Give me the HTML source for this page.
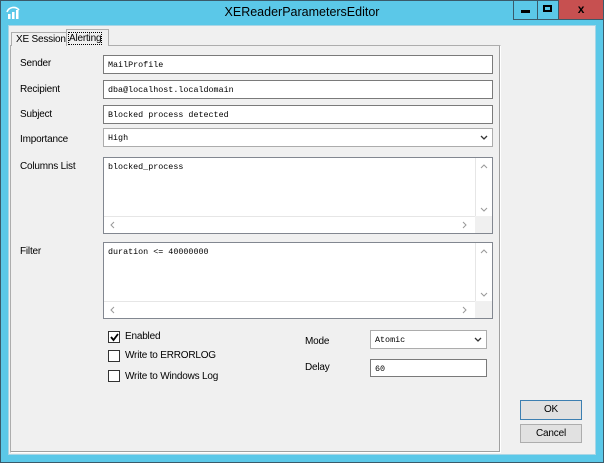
<!DOCTYPE html>
<html><head><style>
*{box-sizing:border-box}
body{margin:0;width:604px;height:463px;background:#5bc8e8;font-family:"Liberation Sans",sans-serif;font-size:10px;letter-spacing:-0.2px;color:#000;position:relative;overflow:hidden}
.abs{position:absolute;white-space:nowrap}
.win{position:absolute;left:0;top:0;width:604px;height:463px;border:1px solid #3a5a6a}
.client{position:absolute;left:8px;top:25px;width:588px;height:430px;background:#f0f0f0;border:1px solid #a9d6e6}
.title{position:absolute;left:0;top:5px;width:604px;text-align:center;font-size:12.5px;letter-spacing:0;color:#000}
.btn{position:absolute;top:0;height:20px;border:1px solid #3a5a6a;border-top:none}
.panel{position:absolute;left:10px;top:45px;width:491px;height:408px;border:1px solid #adadad;border-right-color:#fff;border-bottom-color:#fff;box-shadow:inset -1px -1px 0 #a0a0a0;background:#f0f0f0}
.tab{position:absolute;border:1px solid #adadad;border-bottom:none;background:#f0f0f0;white-space:nowrap}
.lbl{position:absolute;left:20px;white-space:nowrap}
.inp{position:absolute;background:#fff;border:1px solid #7a7a7a;font-family:"Liberation Mono",monospace;font-size:8.4px;letter-spacing:0;padding:4px 4px;white-space:nowrap}
.ta{position:absolute;left:103px;width:390px;height:77px;background:#fff;border:1px solid #828790}
.vs{position:absolute;right:0;top:0;width:17px;height:59px;background:#fff;border-left:1px solid #e6e6e6}
.hs{position:absolute;left:0;bottom:0;width:371px;height:17px;background:#fff;border-top:1px solid #e6e6e6}
.corner{position:absolute;right:0;bottom:0;width:17px;height:17px;background:#f0f0f0}
.cb{position:absolute;left:108px;width:12px;height:12px;border:1px solid #333;background:#fff}
.pb{position:absolute;left:520px;width:62px;height:19px;background:#e1e1e1;border:1px solid #adadad;text-align:center;line-height:17px}
</style></head><body>
<div class="win"></div>
<svg class="abs" style="left:5px;top:4px" width="16" height="16" viewBox="0 0 16 16"><path d="M2 8 A7 7 0 0 1 14 6" stroke="#fff" stroke-width="1.6" fill="none"/><rect x="3" y="10" width="2.5" height="5" fill="#fff"/><rect x="7" y="8" width="2.5" height="7" fill="#fff"/><rect x="11" y="6" width="2.5" height="9" fill="#fff"/></svg>
<div class="title">XEReaderParametersEditor</div>
<div class="btn" style="left:513px;width:25px"><div class="abs" style="left:7px;top:10px;width:9px;height:3px;background:#000"></div></div>
<div class="btn" style="left:537px;width:22px;border-left:none"><div class="abs" style="left:6px;top:5px;width:9px;height:7px;border:2px solid #000"></div></div>
<div class="btn" style="left:559px;width:45px;background:#c75050;border-left:none;text-align:center;font-weight:bold;font-size:12px;line-height:18px">x</div>
<div class="client"></div>
<div class="panel"></div>
<div class="tab" style="left:11px;top:32px;width:56px;height:14px;padding:1px 0 0 4px">XE Session</div>
<div class="tab" style="left:66px;top:29px;width:43px;height:17px;padding:3px 2px"><span style="outline:1px dotted #000">Alerting</span></div>

<div class="lbl" style="top:58px">Sender</div>
<div class="inp" style="left:103px;top:55px;width:390px;height:19px">MailProfile</div>
<div class="lbl" style="top:84px">Recipient</div>
<div class="inp" style="left:103px;top:80px;width:390px;height:19px">dba@localhost.localdomain</div>
<div class="lbl" style="top:109px">Subject</div>
<div class="inp" style="left:103px;top:105px;width:390px;height:19px">Blocked process detected</div>
<div class="lbl" style="top:134px">Importance</div>
<div class="inp" style="left:103px;top:128px;width:390px;height:19px;border-color:#acacac">High<svg class="abs" style="right:4px;top:6px" width="8" height="5"><path d="M1 1 L4 4 L7 1" stroke="#333" stroke-width="1.3" fill="none"/></svg></div>

<div class="lbl" style="top:161px">Columns List</div>
<div class="ta" style="top:157px">
<div class="abs" style="left:4px;top:4px;font-family:'Liberation Mono',monospace;font-size:8.4px;letter-spacing:0">blocked_process</div>
<div class="vs"><svg class="abs" style="left:4px;top:6px" width="8" height="5"><path d="M1 4 L4 1 L7 4" stroke="#999" fill="none"/></svg><svg class="abs" style="left:4px;top:49px" width="8" height="5"><path d="M1 1 L4 4 L7 1" stroke="#999" fill="none"/></svg></div>
<div class="hs"><svg class="abs" style="left:6px;top:4px" width="5" height="8"><path d="M4 1 L1 4 L4 7" stroke="#999" fill="none"/></svg><svg class="abs" style="left:358px;top:4px" width="5" height="8"><path d="M1 1 L4 4 L1 7" stroke="#999" fill="none"/></svg></div>
<div class="corner"></div></div>

<div class="lbl" style="top:246px">Filter</div>
<div class="ta" style="top:242px">
<div class="abs" style="left:4px;top:4px;font-family:'Liberation Mono',monospace;font-size:8.4px;letter-spacing:0">duration &lt;= 40000000</div>
<div class="vs"><svg class="abs" style="left:4px;top:6px" width="8" height="5"><path d="M1 4 L4 1 L7 4" stroke="#999" fill="none"/></svg><svg class="abs" style="left:4px;top:49px" width="8" height="5"><path d="M1 1 L4 4 L7 1" stroke="#999" fill="none"/></svg></div>
<div class="hs"><svg class="abs" style="left:6px;top:4px" width="5" height="8"><path d="M4 1 L1 4 L4 7" stroke="#999" fill="none"/></svg><svg class="abs" style="left:358px;top:4px" width="5" height="8"><path d="M1 1 L4 4 L1 7" stroke="#999" fill="none"/></svg></div>
<div class="corner"></div></div>

<div class="cb" style="top:331px"><svg class="abs" style="left:0;top:0" width="11" height="11"><path d="M2 5 L4.5 8 L9 2" stroke="#000" stroke-width="1.8" fill="none"/></svg></div>
<div class="abs" style="left:125px;top:331px">Enabled</div>
<div class="cb" style="top:350px"></div>
<div class="abs" style="left:125px;top:350px">Write to ERRORLOG</div>
<div class="cb" style="top:370px"></div>
<div class="abs" style="left:125px;top:371px">Write to Windows Log</div>

<div class="abs" style="left:305px;top:336px">Mode</div>
<div class="inp" style="left:370px;top:330px;width:117px;height:19px;border-color:#acacac">Atomic<svg class="abs" style="right:4px;top:6px" width="8" height="5"><path d="M1 1 L4 4 L7 1" stroke="#333" stroke-width="1.3" fill="none"/></svg></div>
<div class="abs" style="left:305px;top:362px">Delay</div>
<div class="inp" style="left:370px;top:359px;width:117px;height:18px">60</div>

<div class="pb" style="top:400px;border-color:#3c7fb1;height:20px">OK</div>
<div class="pb" style="top:424px;height:19px">Cancel</div>
</body></html>
